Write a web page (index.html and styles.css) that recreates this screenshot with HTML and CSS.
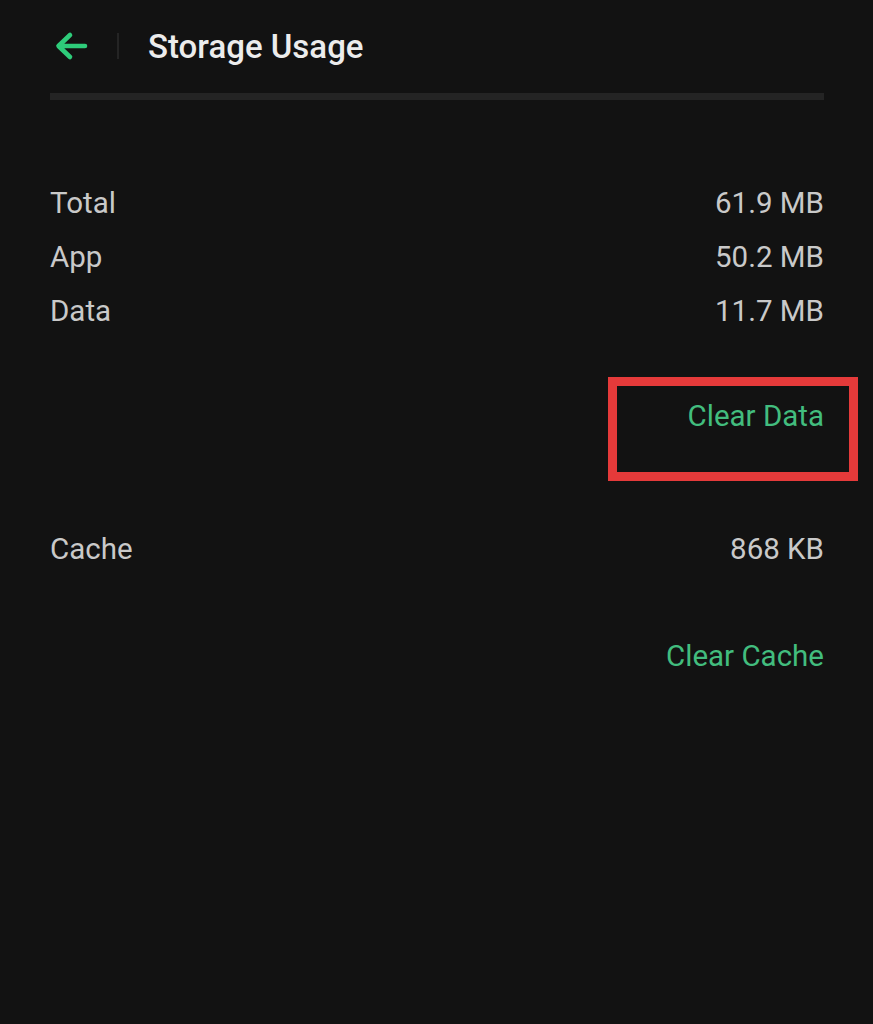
FILE: index.html
```html
<!DOCTYPE html>
<html>
<head>
<meta charset="utf-8">
<link rel="stylesheet" href="styles.css">
</head>
<body>
<div class="screen">
  <header class="topbar">
    <span class="back">
      <svg width="34" height="30" viewBox="0 0 34 30"><path d="M31 15 H5 M16 4 L4.5 15 L16 26" fill="none" stroke="#2ecc7a" stroke-width="4.6" stroke-linecap="round" stroke-linejoin="round"/></svg>
    </span>
    <span class="divider"></span>
    <h1 class="title">Storage Usage</h1>
  </header>
  <div class="bar"></div>
  <main class="content">
    <div class="row first"><span>Total</span><span>61.9 MB</span></div>
    <div class="row"><span>App</span><span>50.2 MB</span></div>
    <div class="row"><span>Data</span><span>11.7 MB</span></div>
    <div class="row action clear-data"><span class="link">Clear Data</span><span class="highlight"></span></div>
    <div class="row cache"><span>Cache</span><span>868 KB</span></div>
    <div class="row action clear-cache"><span class="link">Clear Cache</span></div>
  </main>
</div>
</body>
</html>
```

FILE: styles.css
```css
html, body {
  margin: 0;
  padding: 0;
  background: #121212;
}
.screen {
  width: 873px;
  min-height: 1024px;
  background: #121212;
  font-family: Roboto, "Noto Sans", sans-serif;
}
.topbar {
  height: 93px;
  display: flex;
  align-items: center;
}
.back {
  margin-left: 54px;
  width: 34px;
  height: 30px;
  display: flex;
  margin-top: -2px;
}
.divider {
  width: 2px;
  height: 26px;
  background: #242424;
  margin-left: 29px;
  margin-top: -2px;
}
.title {
  margin: 0 0 0 29px;
  font-size: 33px;
  font-weight: 500;
  color: #ececec;
  letter-spacing: 0;
}
.bar {
  height: 7px;
  background: #242424;
  margin: 0 49px 0 50px;
}
.content {
  padding: 0 49px 0 50px;
  margin-top: 76px;
}
.row {
  height: 54px;
  display: flex;
  justify-content: space-between;
  align-items: center;
  font-size: 29.5px;
  color: #c9c9c9;
}
.row.action {
  justify-content: flex-end;
  position: relative;
}
.link {
  color: #42bd7e;
}
.clear-data {
  margin-top: 51px;
}
.cache {
  margin-top: 79px;
}
.clear-cache {
  margin-top: 53px;
}
.highlight {
  position: absolute;
  top: -12px;
  bottom: -38px;
  right: -34px;
  width: 250px;
  box-sizing: border-box;
  border: 9px solid #e53a3a;
}
```
